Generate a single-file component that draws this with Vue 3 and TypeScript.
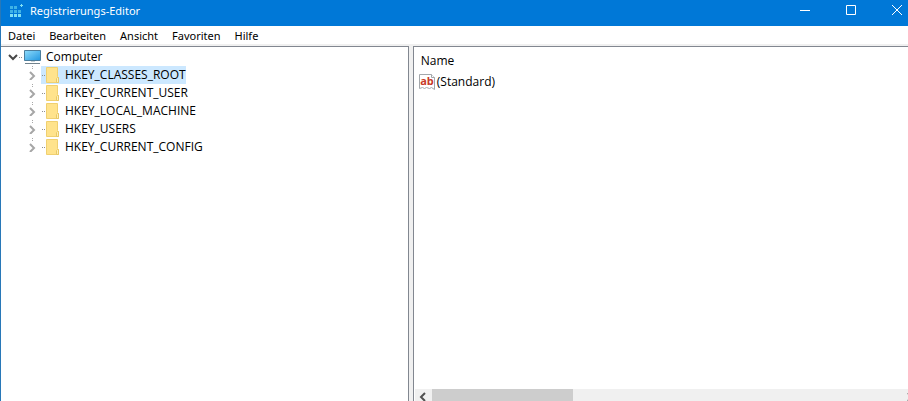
<script setup lang="ts">
import { ref } from 'vue'

const menus: string[] = ['Datei', 'Bearbeiten', 'Ansicht', 'Favoriten', 'Hilfe']
const hives: string[] = [
  'HKEY_CLASSES_ROOT',
  'HKEY_CURRENT_USER',
  'HKEY_LOCAL_MACHINE',
  'HKEY_USERS',
  'HKEY_CURRENT_CONFIG',
]
const selected = ref<string>(hives[0])
</script>

<template>
  <div class="window">
    <header class="titlebar">
      <svg class="app-icon" width="14" height="14" viewBox="0 0 14 14" aria-hidden="true">
        <g fill="#3fb2e6">
          <path d="M0 2h3v3H0zM4 2h3v3H4zM0 6h3v3H0zM4 6h3v3H4zM8 6h3v3H8z" />
        </g>
        <path fill="#7fe0f4" d="M0 10h3v3H0zM4 10h3v3H4zM8 10h3v3H8z" />
        <path fill="#7fe0f4" d="M11 0h1v1h1v1h-1v1h-1v-1h-1v-1h1z" />
      </svg>
      <h1 class="title">Registrierungs-Editor</h1>
      <div class="controls">
        <button type="button" aria-label="Minimieren">
          <svg width="10" height="10" viewBox="0 0 10 10"><path d="M0 5.5h10" /></svg>
        </button>
        <button type="button" aria-label="Maximieren">
          <svg width="10" height="10" viewBox="0 0 10 10"><path d="M.5.5h9v9h-9z" /></svg>
        </button>
        <button type="button" aria-label="Schließen">
          <svg width="10" height="10" viewBox="0 0 10 10"><path d="M0 0l10 10M10 0L0 10" /></svg>
        </button>
      </div>
    </header>

    <nav class="menubar">
      <button v-for="m in menus" :key="m" type="button">{{ m }}</button>
    </nav>

    <main class="panes">
      <section class="tree">
        <div class="node root">
          <svg class="toggle" width="10" height="10" viewBox="0 0 10 10" aria-hidden="true">
            <path d="M1 3l4 4 4-4" fill="none" stroke="#484848" stroke-width="2" />
          </svg>
          <span class="dots"></span>
          <svg class="computer" width="17" height="16" viewBox="0 0 17 16" aria-hidden="true">
            <defs>
              <linearGradient id="screen" x1="0" y1="0" x2="1" y2="1">
                <stop offset="0" stop-color="#8fdcfb" />
                <stop offset="1" stop-color="#2196e0" />
              </linearGradient>
            </defs>
            <path d="M.5 1.5h16v10H.5z" fill="url(#screen)" stroke="#4b7d9c" />
            <path d="M7 12h4v1H7z" fill="#c9d2d6" />
            <path d="M1 14h15v1H1z" fill="#71828c" />
          </svg>
          <span class="label">Computer</span>
        </div>
        <ul>
          <li v-for="h in hives" :key="h" class="node" :class="{ selected: h === selected }">
            <svg class="toggle" width="10" height="10" viewBox="0 0 10 10" aria-hidden="true">
              <path d="M3 2l4 4-4 4" fill="none" stroke="#a6a6a6" stroke-width="2" />
            </svg>
            <button type="button" @click="selected = h">
              <span class="dots"></span>
              <svg class="folder" width="14" height="16" viewBox="0 0 14 16" aria-hidden="true">
                <path d="M.5.5h11v9l1 1v5H.5z" fill="#ffe38c" stroke="#f0d070" />
                <path d="M10.5 15.5v-4l1-1h1v5z" fill="#fff0b5" stroke="#e8c866" />
              </svg>
              <span class="label">{{ h }}</span>
            </button>
          </li>
        </ul>
      </section>

      <section class="values">
        <table>
          <thead>
            <tr><th scope="col">Name</th></tr>
          </thead>
          <tbody>
            <tr>
              <td>
                <div class="value">
                  <svg class="string-icon" width="17" height="16" viewBox="0 0 17 16" aria-hidden="true">
                    <path
                      d="M.5.5h12l3 3v12l-3-2-2 1-3-1-2 1-2-1-3 1z"
                      fill="#fff"
                      stroke="#a3a7ab"
                    />
                    <path d="M12.5.5v3h3" fill="#fff" stroke="#a3a7ab" />
                    <text x="8" y="11" text-anchor="middle">ab</text>
                  </svg>
                  <span>(Standard)</span>
                </div>
              </td>
            </tr>
          </tbody>
        </table>
        <div class="scrollbar">
          <button type="button" aria-label="Nach links">
            <svg width="8" height="10" viewBox="0 0 8 10">
              <path d="M6 1L2 5l4 4" fill="none" stroke="#505050" stroke-width="2" />
            </svg>
          </button>
          <div class="track"><div class="thumb"></div></div>
          <button type="button" class="right" aria-label="Nach rechts">
            <svg width="8" height="10" viewBox="0 0 8 10">
              <path d="M2 1l4 4-4 4" fill="none" stroke="#505050" stroke-width="2" />
            </svg>
          </button>
        </div>
      </section>
    </main>
  </div>
</template>

<style>
body {
  margin: 0;
  overflow: hidden;
}
</style>

<style scoped>
.window {
  box-sizing: border-box;
  display: flex;
  flex-direction: column;
  height: 100vh;
  overflow: hidden;
  border-left: 1px solid #2878b8;
  background: #f0f0f0;
  color: #000;
  font: 12px/18px "Open Sans", "Noto Sans", sans-serif;
}

button {
  margin: 0;
  padding: 0;
  border: 0;
  background: none;
  color: inherit;
  font: inherit;
}

svg {
  display: block;
  flex: none;
}

.titlebar {
  display: flex;
  flex: none;
  height: 26px;
  padding-left: 9px;
  background: #0078d7;
  color: #fff;
}

.app-icon {
  margin: 4px 6px 0 0;
}

.title {
  flex: 1;
  margin: 2px 0 0;
  font-family: "Noto Sans", "Open Sans", sans-serif;
  font-size: 11px;
  font-weight: 400;
}

.controls {
  display: flex;
  margin-right: -12px;
}

.controls button {
  display: flex;
  justify-content: center;
  width: 46px;
  padding-top: 5px;
}

.controls path {
  fill: none;
  stroke: #fff;
}

.menubar {
  display: flex;
  flex: none;
  gap: 14px;
  height: 18px;
  padding-left: 7px;
  border-bottom: 2px solid #f0f0f0;
  background: #fff;
  font-family: "Noto Sans", "Open Sans", sans-serif;
  font-size: 11px;
  line-height: 20px;
}

.panes {
  display: grid;
  flex: 1;
  grid-template-columns: 14fr 17fr;
  gap: 4px;
  min-height: 0;
}

.tree,
.values {
  min-width: 0;
  border-top: 1px solid #828790;
  background: #fff;
}

.tree {
  padding: 1px 0 0 7px;
  border-right: 1px solid #828790;
}

.node {
  display: flex;
  align-items: center;
  height: 18px;
}

.dots {
  width: 5px;
  height: 1px;
  background: repeating-linear-gradient(90deg, transparent 0 1px, #909090 1px 2px);
}

.computer {
  margin: 0 5px 0 1px;
}

ul {
  margin: 0;
  padding: 0 0 0 19px;
  list-style: none;
}

li.node {
  background: repeating-linear-gradient(#a8a8a8 0 1px, transparent 1px 2px) 5px 0 / 1px 4px no-repeat;
}

.node button {
  display: flex;
  align-items: center;
  height: 18px;
  margin-left: 4px;
}

.folder {
  margin-right: 5px;
}

.selected button {
  background: #cce8ff;
}

.values {
  display: flex;
  flex-direction: column;
  justify-content: space-between;
  border-left: 1px solid #828790;
  overflow: hidden;
}

table {
  border-collapse: collapse;
}

th {
  height: 24px;
  padding: 2px 0 0 7px;
  font-weight: 400;
  text-align: left;
}

td {
  padding: 0 0 0 5px;
}

.value {
  display: flex;
  align-items: center;
  gap: 1px;
}

.string-icon {
  overflow: visible;
}

.string-icon text {
  fill: #c83a28;
  font: bold 11px "Open Sans", sans-serif;
}

.scrollbar {
  display: flex;
  flex: none;
  height: 12px;
  margin-left: 1px;
  overflow: hidden;
  background: #f0f0f0;
}

.scrollbar button {
  display: flex;
  flex: none;
  justify-content: center;
  width: 17px;
  padding-top: 3px;
}

.scrollbar .right {
  margin-right: -10px;
}

.track {
  flex: 1;
}

.thumb {
  width: 30%;
  height: 100%;
  background: #cdcdcd;
}
</style>
